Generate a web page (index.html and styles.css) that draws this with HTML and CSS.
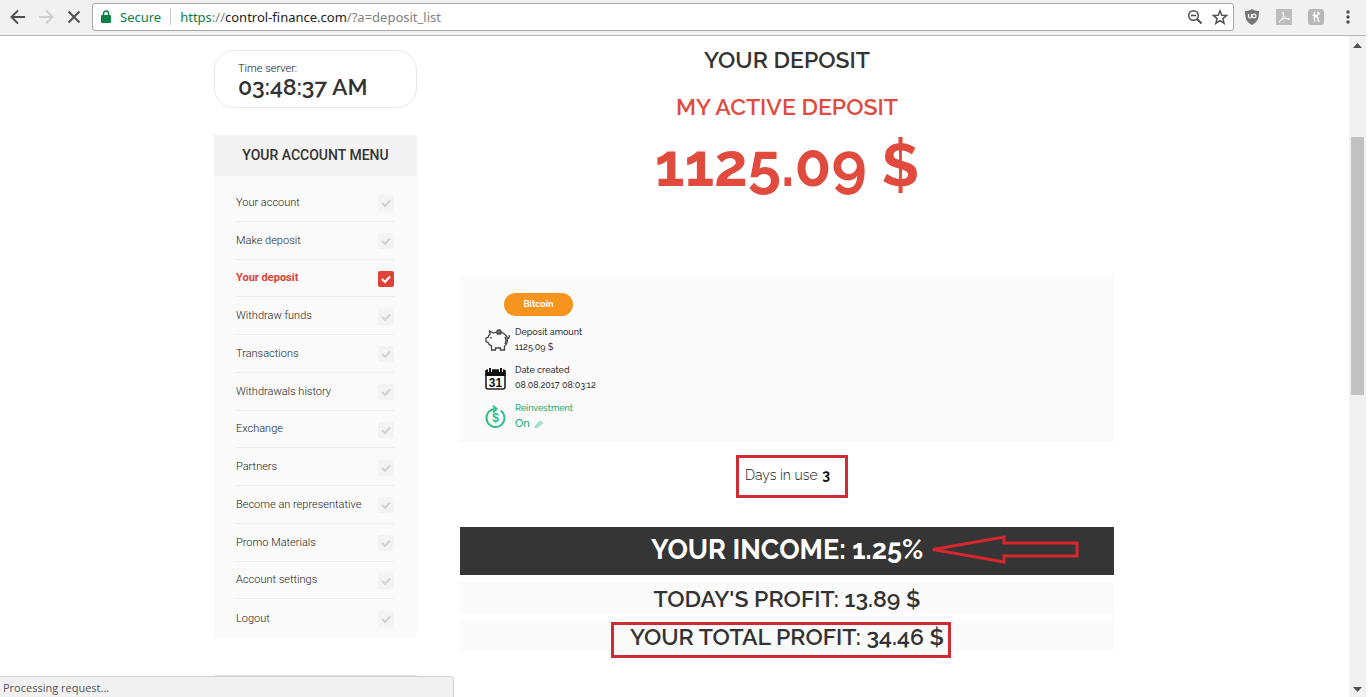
FILE: index.html
```html
<!DOCTYPE html>
<html lang="en">
<head>
<meta charset="utf-8">
<title>Your deposit</title>
<link rel="stylesheet" href="styles.css">
</head>
<body>
<svg class="defs" aria-hidden="true"><symbol id="tick" viewBox="0 0 16 16"><path d="M4 8l3 3 5-5.500" fill="none" stroke="currentColor" stroke-width="2.200"/></symbol></svg>
<header class="toolbar">
  <button class="tool" aria-label="Back"><svg width="16" height="16" viewBox="0 0 16 16" fill="none" stroke="#505050" stroke-width="2"><path d="M15 8H2M8 1.500L1.500 8 8 14.500"/></svg></button>
  <button class="tool" aria-label="Forward"><svg width="16" height="16" viewBox="0 0 16 16" fill="none" stroke="#cfcfcf" stroke-width="2"><path d="M1 8h13M8 1.500L14.500 8 8 14.500"/></svg></button>
  <button class="tool" aria-label="Stop"><svg width="16" height="16" viewBox="0 0 16 16" fill="none" stroke="#505050" stroke-width="2"><path d="M2.500 2.500l11 11M13.500 2.500l-11 11"/></svg></button>
  <div class="address">
    <svg class="lock" width="10" height="13" viewBox="0 0 10 13"><path d="M1 5h8q1 0 1 1v6q0 1-1 1H1q-1 0-1-1V6q0-1 1-1z" fill="#0b8043"/><path d="M2.500 5.500V3.500a2.500 2.500 0 0 1 5 0v2" fill="none" stroke="#0b8043" stroke-width="1.500"/></svg>
    <span class="secure">Secure</span>
    <span class="url"><span class="scheme">https</span>://<span class="host">control-finance.com</span>/?a=deposit_list</span>
    <button class="tool" aria-label="Zoom"><svg width="16" height="16" viewBox="0 0 16 16" fill="none" stroke="#505050"><circle cx="6.500" cy="6.500" r="4.800" stroke-width="1.500"/><path d="M10 10l4.500 4.500" stroke-width="2"/><path d="M4 6.500h5" stroke-width="1.500"/></svg></button>
    <button class="tool" aria-label="Bookmark"><svg width="16" height="16" viewBox="0 0 16 16" fill="none" stroke="#505050" stroke-width="1.500"><path d="M8 1.800l1.800 4.400 4.700.3-3.600 3.100 1.200 4.700L8 11.700l-4.100 2.600 1.200-4.700L1.500 6.500l4.700-.3z"/></svg></button>
  </div>
  <div class="extensions">
    <button class="tool" aria-label="uBlock Origin"><svg width="16" height="16" viewBox="0 0 16 16"><path d="M8 0c2 1.500 4.500 2 7 2 0 7-1 11-7 14C2 13 1 9 1 2c2.500 0 5-.5 7-2z" fill="#777"/><path d="M4.500 5v2.500q0 1.500 1.500 1.500t1.500-1.500V5" fill="none" stroke="#fff" stroke-width="1.200"/><circle cx="10.200" cy="7" r="1.800" fill="none" stroke="#fff" stroke-width="1.200"/></svg></button>
    <button class="tool" aria-label="Acrobat"><svg width="16" height="16" viewBox="0 0 16 16"><path d="M0 0h16v16H0z" fill="#bdbdbd"/><path d="M3 13.500C6 11 8 6.500 7.500 3.500c-.2-1-1.300-.7-1 .4C7 7 9.500 10 13 10.500c1 0 1-1-.2-1.100C9 9 6 10 3.500 12" fill="none" stroke="#fff"/></svg></button>
    <button class="tool" aria-label="Honey"><svg width="16" height="16" viewBox="0 0 16 16"><rect width="16" height="16" rx="3" fill="#b8b8b8"/><path d="M6.500 3v9.500M6.500 9.500c.5-2.500 3.500-2.500 3.500-.3v2q0 1.500 1.500 1M4.500 6C6 7 10 6.500 11 5c.6-1.300-1-2-1.700-.8" fill="none" stroke="#fff" stroke-width="1.400"/></svg></button>
    <button class="tool" aria-label="Menu"><svg width="16" height="16" viewBox="0 0 16 16" fill="#505050"><circle cx="8" cy="3" r="1.700"/><circle cx="8" cy="8" r="1.700"/><circle cx="8" cy="13" r="1.700"/></svg></button>
  </div>
</header>
<div class="viewport">
  <div class="page">
    <div class="container">
      <aside class="sidebar">
        <section class="clock"><span class="clock-label">Time server:</span><span class="clock-time">03:48:37 AM</span></section>
        <nav class="menu">
          <h2 class="menu-title">YOUR ACCOUNT MENU</h2>
          <ul class="menu-list">
            <li><a href="#">Your account<svg class="tick"><use href="#tick"/></svg></a></li>
            <li><a href="#">Make deposit<svg class="tick"><use href="#tick"/></svg></a></li>
            <li><a href="#" class="active">Your deposit<svg class="tick"><use href="#tick"/></svg></a></li>
            <li><a href="#">Withdraw funds<svg class="tick"><use href="#tick"/></svg></a></li>
            <li><a href="#">Transactions<svg class="tick"><use href="#tick"/></svg></a></li>
            <li><a href="#">Withdrawals history<svg class="tick"><use href="#tick"/></svg></a></li>
            <li><a href="#">Exchange<svg class="tick"><use href="#tick"/></svg></a></li>
            <li><a href="#">Partners<svg class="tick"><use href="#tick"/></svg></a></li>
            <li><a href="#">Become an representative<svg class="tick"><use href="#tick"/></svg></a></li>
            <li><a href="#">Promo Materials<svg class="tick"><use href="#tick"/></svg></a></li>
            <li><a href="#">Account settings<svg class="tick"><use href="#tick"/></svg></a></li>
            <li><a href="#">Logout<svg class="tick"><use href="#tick"/></svg></a></li>
          </ul>
        </nav>
        <div class="next-panel"></div>
      </aside>
      <main class="content">
        <h1 class="title">YOUR DEPOSIT</h1>
        <h2 class="subtitle">MY ACTIVE DEPOSIT</h2>
        <p class="amount">1125.09 $</p>
        <section class="card">
          <button class="coin">Bitcoin</button>
          <div class="fact">
            <svg width="26" height="26" viewBox="-1 -2 26 26" fill="none" stroke="#444" stroke-width="1.300"><path d="M5 5l-.5-3 4 2c3-1.300 8-1.500 11 1 2.300 1.800 3.500 4 3 7-.3 2.400-1.500 4-3 5.200V21h-4v-2h-5v2h-4v-4C4 16.500 3.500 15 3 13.500L1 12.500V9l2-.5C3.500 7 4 6 5 5zM22 10q3-1 2-4"/><circle cx="14" cy="3" r="2.200" fill="#777"/><path d="M20 8q2 3 0 7M6 8v1.500" stroke-width="1.500"/></svg>
            <p>Deposit amount<br>1125.09 $</p>
          </div>
          <div class="fact">
            <svg width="26" height="26" viewBox="1 -2 26 26"><rect x="3" y="3" width="19" height="19" rx="2" fill="#fff" stroke="#222" stroke-width="1.600"/><path d="M2.500 3h20v6h-20z" fill="#111"/><path d="M7 0v5M18 0v5" stroke="#fafafa" stroke-width="4"/><path d="M7 1v4M18 1v4" stroke="#111" stroke-width="2"/><text class="day" x="12.500" y="20" text-anchor="middle">31</text></svg>
            <p>Date created<br>08.08.2017 08:03:12</p>
          </div>
          <div class="fact green">
            <svg width="26" height="26" viewBox="1 -3 26 26" fill="none" stroke="#2fc08a" stroke-width="2"><path d="M17.500 4.500a9 9 0 1 1-6-1.500M10 -.2L13.500 3 10 6.500"/><text class="dollar" x="12.500" y="16" text-anchor="middle">$</text></svg>
            <p>Reinvestment<br><span class="on">On <svg class="pencil" width="9" height="9" viewBox="0 0 9 9"><path d="M1 8l1-3 4.500-4L8.500 3 4 7z" fill="#a5e5c9" stroke="#8fdcb9"/></svg></span></p>
          </div>
        </section>
        <p class="days">Days in use <b>3</b></p>
        <section class="income">YOUR INCOME: 1.25%
          <svg class="arrow" width="150" height="30" viewBox="0 0 150 30" fill="none" stroke="#d8262f" stroke-width="3"><path d="M4 14.500L75 2v6h73v13H75v6z"/></svg>
        </section>
        <section class="row">TODAY'S PROFIT: 13.89 $</section>
        <section class="row">YOUR TOTAL PROFIT: 34.46 $<span class="mark"></span></section>
      </main>
    </div>
  </div>
  <div class="scrollbar">
    <svg width="9" height="5" viewBox="0 0 9 5"><path d="M0 5l4.500-5L9 5z" fill="#505050"/></svg>
    <div class="track"><div class="thumb"></div></div>
    <svg width="9" height="5" viewBox="0 0 9 5"><path d="M0 0h9L4.500 5z" fill="#505050"/></svg>
  </div>
</div>
<div class="status">Processing request...</div>
</body>
</html>
```
FILE: styles.css
```css
* { box-sizing: border-box; }
body {
  margin: 0;
  height: 100vh;
  padding-right: 5px;
  display: flex;
  flex-direction: column;
  overflow: hidden;
  background: #fff;
  color: #333;
  font-family: Raleway, Lato, sans-serif;
}
h1, h2, p, ul { margin: 0; padding: 0; }
button { border: 0; padding: 0; background: none; font: inherit; }
.defs { position: absolute; width: 0; height: 0; }

.toolbar {
  flex: none;
  height: 36px;
  display: flex;
  align-items: center;
  gap: 12px;
  padding: 0 10px 2px 10px;
  background: #f1f1f1;
  border-bottom: 1px solid #b6b6b6;
}
.tool { display: flex; flex: none; }
.address {
  flex: 1;
  height: 28px;
  display: flex;
  align-items: center;
  gap: 9px;
  padding: 0 5px 0 8px;
  margin: 0 -2px;
  background: #fff;
  border: 1px solid #a9a9a9;
  border-radius: 3px;
  font: 13px/20px "Noto Sans", sans-serif;
}
.secure { color: #0b8043; border-right: 1px solid #c4c4c4; padding-right: 9px; line-height: 16px; }
.url { flex: 1; color: #808080; }
.scheme { color: #0b8043; }
.host { color: #222; }
.extensions { display: flex; gap: 16px; }

.viewport { flex: 1; min-height: 0; display: flex; }
.page { flex: 1; overflow: hidden; padding-right: 21px; }
.container {
  max-width: 900px;
  margin: 0 auto;
  display: flex;
  gap: 43px;
}
.sidebar { width: 203px; flex: none; padding-top: 14px; font-family: Roboto, sans-serif; }
.clock {
  height: 58px;
  padding: 10px 23px;
  display: flex;
  flex-direction: column;
  border: 1px solid #e8e8e8;
  border-radius: 20px;
}
.clock-label { font-size: 11px; font-weight: 300; line-height: 15px; color: #111; }
.clock-time { font: 600 23px/22px Raleway, Lato, sans-serif; }
.menu { margin-top: 27px; background: #fafafa; }
.menu-title {
  height: 41px;
  background: #f3f3f3;
  font-size: 14px;
  line-height: 41px;
  font-weight: 500;
  text-align: center;
}
.menu-list {
  height: 461px;
  padding: 8px 23px 0 22px;
  display: grid;
  grid-template-rows: repeat(12, 1fr);
  list-style: none;
}
.menu-list li { display: grid; border-bottom: 1px solid #eee; }
.menu-list li:last-child { border-bottom: 0; }
.menu-list a {
  display: flex;
  align-items: center;
  justify-content: space-between;
  color: #222;
  font-size: 11px;
  font-weight: 300;
  text-decoration: none;
}
.tick { width: 16px; height: 16px; margin-top: 2px; background: #f3f3f3; border-radius: 2px; color: #d2d2d2; }
.menu-list .active { color: #e04035; font-weight: bold; }
.active .tick { background: #e04035; color: #fff; }
.next-panel { margin-top: 38px; height: 30px; background: #ddd; }

.content { flex: 1; min-width: 0; text-align: center; }
.title, .subtitle { font-size: 23px; font-weight: 600; line-height: 47px; }
.subtitle, .amount { color: #e04b3e; }
.amount { font-size: 60px; line-height: 70px; font-weight: bold; }
.card {
  height: 166px;
  margin-top: 76px;
  padding: 17px 24px;
  background: #fafafa;
  text-align: left;
  font-size: 9px;
  font-weight: 500;
  line-height: 15px;
}
.coin {
  display: block;
  width: 69px;
  height: 23px;
  margin: 0 0 9px 20px;
  border-radius: 12px;
  background: #f7941d;
  color: #fff;
  font-weight: bold;
}
.fact { display: flex; align-items: center; gap: 5px; height: 30px; margin-bottom: 8px; }
.green { color: #22a866; }
.on { font-size: 11px; }
.pencil { margin-left: 2px; vertical-align: -2px; }
.day { font: bold 12px "Liberation Sans", sans-serif; fill: #111; }
.dollar { font: bold 12px "Liberation Sans", sans-serif; fill: #2fc08a; stroke: none; }
.days {
  width: 112px;
  height: 43px;
  margin: 13px auto 0 276px;
  padding-left: 6px;
  border: 3px solid #cf2b35;
  font-size: 14px;
  font-weight: 300;
  line-height: 34px;
  text-align: left;
  color: #111;
}
.days b { margin-left: 1px; font-weight: bold; }
.income {
  position: relative;
  height: 48px;
  margin-top: 29px;
  background: #353535;
  color: #fff;
  font-size: 27px;
  font-weight: bold;
  line-height: 46px;
}
.arrow { position: absolute; left: 469px; top: 8px; }
.row {
  position: relative;
  height: 31px;
  margin-top: 7px;
  background: #fafafa;
  font-size: 23px;
  font-weight: 600;
  line-height: 33px;
}
.mark { position: absolute; left: 151px; top: 2px; width: 340px; height: 36px; border: 3px solid #cf2b35; }

.scrollbar {
  width: 17px;
  display: flex;
  flex-direction: column;
  align-items: center;
  padding: 7px 0 5px;
  background: #f1f1f1;
}
.track { flex: 1; align-self: stretch; padding: 89px 2px 0; }
.thumb { height: 258px; background: #c1c1c1; }
.status {
  position: fixed;
  left: 0;
  bottom: 0;
  width: 454px;
  height: 21px;
  padding-left: 3px;
  background: #f1f1f1;
  border: 1px solid #d2d2d2;
  border-width: 1px 1px 0 0;
  border-radius: 0 4px 0 0;
  color: #555;
  font: 11px/21px "Open Sans", sans-serif;
}
```
